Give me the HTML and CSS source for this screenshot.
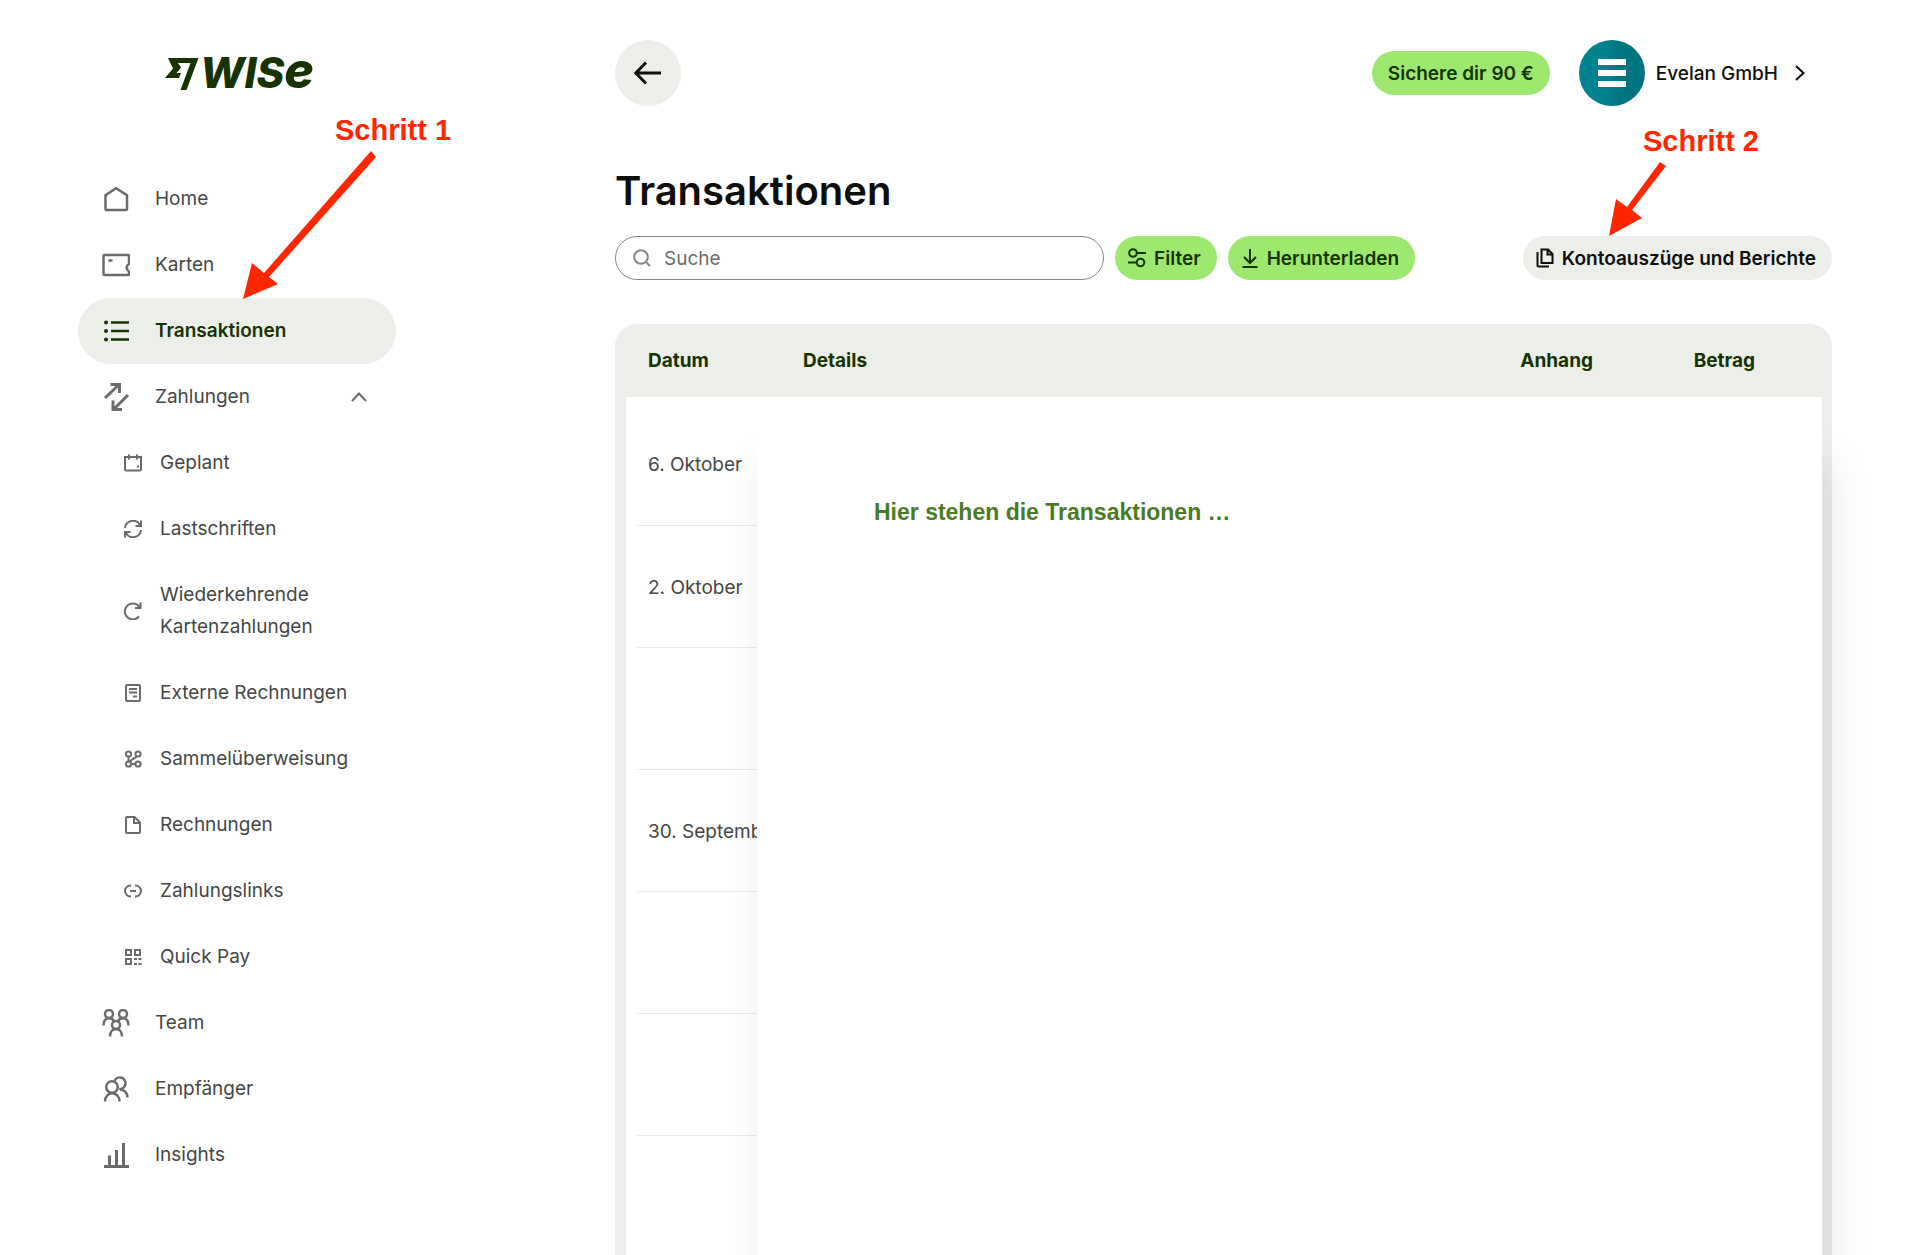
FILE: index.html
```html
<!DOCTYPE html>
<html lang="de">
<head>
    <meta charset="UTF-8">
    <meta name="viewport" content="width=device-width, initial-scale=1.0">
    <title>Transaktionen</title>
    <link rel="stylesheet" href="styles.css">
</head>
<body>
    <div class="layout">
        <aside class="sidebar">
            <a class="logo" href="#" aria-label="Wise">
                <svg width="34" height="33" viewBox="0 0 34 33"><path fill-rule="evenodd" d="M3 1h30.500L21.500 33H15.500L25.500 6H13l3 4.500-4.500 5.500h4.500L14 21H0l8-9.500z"/></svg>
                <span class="logo-text">WIS<span class="logo-e">e</span></span>
            </a>
            <nav class="nav">
                <a class="nav-item" href="#">
                    <svg class="icon" viewBox="0 0 28 28"><path d="M3.500 10.200 14 3.200l11 7V24a1 1 0 0 1-1 1H4.500a1 1 0 0 1-1-1z"/></svg>
                    Home
                </a>
                <a class="nav-item" href="#">
                    <svg class="icon" viewBox="0 0 28 28"><path d="M27 11V5a1 1 0 0 0-1-1H2.500a1 1 0 0 0-1 1v18a1 1 0 0 0 1 1H26a1 1 0 0 0 1-1v-2.500c-3-2-3.500-5.500 0-7.500zM6.500 9.500h4"/></svg>
                    Karten
                </a>
                <a class="nav-item active" href="#">
                    <svg class="icon" viewBox="0 0 28 28"><path d="M9 5.500h18M9 14h18M9 22.500h18"/><g class="dots"><circle cx="4" cy="5.500" r="2"/><circle cx="4" cy="14" r="2"/><circle cx="4" cy="22.500" r="2"/></g></svg>
                    Transaktionen
                </a>
                <a class="nav-item" href="#">
                    <svg class="icon icon-bold" viewBox="0 0 28 28"><path d="M3 15 17 1.500M8.500 1.500H17.500V10M26 12 12 26M11 17.500V26.500h9"/></svg>
                    Zahlungen
                    <svg class="chevron-up" width="18" height="12" viewBox="0 0 18 12"><path d="M2 10l7-7.500 7 7.500"/></svg>
                </a>
                <div class="subnav">
                    <a class="nav-item" href="#">
                        <svg class="icon-small" viewBox="0 0 18 18"><path d="M1 3h16v12.500a1 1 0 0 1-1 1H2a1 1 0 0 1-1-1zM5 .500v5M13 .500v5M13 12.500h2"/></svg>
                        Geplant
                    </a>
                    <a class="nav-item" href="#">
                        <svg class="icon-small" viewBox="0 0 18 18"><path d="M1 8A8 8 0 0 1 16 5M17 .500V6h-5.500M17 10A8 8 0 0 1 2 13M1 17.500V12h5.500"/></svg>
                        Lastschriften
                    </a>
                    <a class="nav-item" href="#">
                        <svg class="icon-small" viewBox="0 0 18 18"><path d="M15 14.500A8 8 0 1 1 15.500 5M16.500 .500V6H11"/></svg>
                        Wiederkehrende<br>Kartenzahlungen
                    </a>
                    <a class="nav-item" href="#">
                        <svg class="icon-small" viewBox="0 0 18 18"><path d="M3 1h12a1 1 0 0 1 1 1v14a1 1 0 0 1-1 1H3a1 1 0 0 1-1-1V2a1 1 0 0 1 1-1zM5 5h8M5 8.500h8M9 12.500h4"/></svg>
                        Externe Rechnungen
                    </a>
                    <a class="nav-item" href="#">
                        <svg class="icon-small" viewBox="0 0 18 18"><circle cx="4.500" cy="4" r="2.600"/><circle cx="14" cy="4" r="2.600"/><circle cx="4.500" cy="14" r="2.600"/><circle cx="14" cy="14" r="2.600"/><path d="M4.500 6.500v5M12.500 6.500c-1 2.500-5 1.500-6 5M7 14h4.500"/></svg>
                        Sammelüberweisung
                    </a>
                    <a class="nav-item" href="#">
                        <svg class="icon-small" viewBox="0 0 18 18"><path d="M3 1h7.500L16 6.500V16a1 1 0 0 1-1 1H3a1 1 0 0 1-1-1V2a1 1 0 0 1 1-1zM10 1v6h6"/></svg>
                        Rechnungen
                    </a>
                    <a class="nav-item" href="#">
                        <svg class="icon-small" viewBox="0 0 18 18"><path d="M7 3.500H6.500a5.500 5.500 0 0 0 0 11H7M11 3.500h.500a5.500 5.500 0 0 1 0 11H11M6 9h6"/></svg>
                        Zahlungslinks
                    </a>
                    <a class="nav-item" href="#">
                        <svg class="icon-small" viewBox="0 0 18 18"><path d="M2 2h5v5H2zM11 2h5v5h-5zM2 11h5v5H2zM10 11h3M14.500 11h3M10 16h3M14.500 16h3"/></svg>
                        Quick Pay
                    </a>
                </div>
                <a class="nav-item" href="#">
                    <svg class="icon" viewBox="0 0 28 28"><circle cx="7" cy="5" r="4"/><circle cx="21" cy="5" r="4"/><circle cx="14" cy="16" r="4"/><path d="M1.500 16.500C1.500 8 9 7.500 12 12M26.500 16.500C26.500 8 19 7.500 16 12M8 27.500c0-10 12-10 12 0"/></svg>
                    Team
                </a>
                <a class="nav-item" href="#">
                    <svg class="icon" viewBox="0 0 28 28"><circle cx="10" cy="12" r="5.800"/><path d="M3 26.500c0-11 14.500-11 14.500 0M12.500 5.800a5.800 5.800 0 1 1 4.800 8.200M18 14.500c4 0 7.500 3 7.500 8"/></svg>
                    Empfänger
                </a>
                <a class="nav-item" href="#">
                    <svg class="icon icon-bold" viewBox="0 0 28 28"><path d="M2 25.500h25M7.500 25V14.500M14.500 25V9M21.500 25V2"/></svg>
                    Insights
                </a>
            </nav>
            <div class="step step-one">
                <strong>Schritt 1</strong>
                <svg width="133" height="148" viewBox="0 0 133 148"><path d="M128 0l5 6L26 126l9 7L0 148l9-36 12 10z"/></svg>
            </div>
        </aside>

        <main class="main">
            <header class="topbar">
                <button class="back" type="button" aria-label="Zurück">
                    <svg width="28" height="24" viewBox="0 0 28 24"><path d="M27 12H2M12 1.500 1.800 12 12 22.500"/></svg>
                </button>
                <button class="btn btn-green invite" type="button">Sichere dir 90 €</button>
                <a class="profile" href="#">
                    <span class="avatar">
                        <svg width="28" height="28" viewBox="0 0 28 28"><path d="M0 0h28v6H0zM0 11h28v6H0zM0 22h28v6H0z"/></svg>
                    </span>
                    Evelan GmbH
                    <svg class="chevron-right" width="12" height="18" viewBox="0 0 12 18"><path d="M2 2l7.500 7L2 16"/></svg>
                </a>
            </header>

            <h1>Transaktionen</h1>

            <div class="toolbar">
                <label class="search">
                    <svg width="18" height="18" viewBox="0 0 18 18"><circle cx="8" cy="8" r="6.800"/><path d="M13 13l4 4"/></svg>
                    <input type="search" placeholder="Suche" aria-label="Suche">
                </label>
                <button class="btn btn-green" type="button">
                    <svg width="18" height="20" viewBox="0 0 18 20"><circle cx="5" cy="5" r="3.800"/><circle cx="12.500" cy="14.500" r="3.800"/><path d="M9 5h9M0 14.500h8.500"/></svg>
                    Filter
                </button>
                <button class="btn btn-green" type="button">
                    <svg width="18" height="20" viewBox="0 0 18 20"><path d="M9 1v14M3 9l6 6 6-6M1.500 19h15"/></svg>
                    Herunterladen
                </button>
                <button class="btn btn-gray" type="button">
                    <svg width="18" height="20" viewBox="0 0 18 20"><path d="M6 1.500h6l4.500 4.500v9h-11V1.500zM11.500 1.500V6.500h5M1.500 4v13.500a1 1 0 0 0 1 1H13"/></svg>
                    Kontoauszüge und Berichte
                </button>
            </div>

            <div class="table-card">
                <table>
                    <thead>
                        <tr>
                            <th class="col-date">Datum</th>
                            <th>Details</th>
                            <th class="col-file">Anhang</th>
                            <th class="col-amount">Betrag</th>
                        </tr>
                    </thead>
                    <tbody>
                        <tr><td>6. Oktober</td><td></td><td></td><td></td></tr>
                        <tr><td>2. Oktober</td><td></td><td></td><td></td></tr>
                        <tr><td></td><td></td><td></td><td></td></tr>
                        <tr><td>30. September</td><td></td><td></td><td></td></tr>
                        <tr><td></td><td></td><td></td><td></td></tr>
                        <tr><td></td><td></td><td></td><td></td></tr>
                        <tr><td></td><td></td><td></td><td></td></tr>
                    </tbody>
                </table>
                <div class="cover">Hier stehen die Transaktionen …</div>
            </div>

            <div class="step step-two">
                <strong>Schritt 2</strong>
                <svg width="57" height="74" viewBox="0 0 57 74"><path d="M51 0l6 4L23 48l10 8L0 74l7-37 11 8z"/></svg>
            </div>
        </main>
    </div>
</body>
</html>
```

FILE: styles.css
```css
* {
    box-sizing: border-box;
}
body {
    margin: 0;
    height: 100vh;
    overflow: hidden;
    background: #fff;
    color: #454745;
    font-family: Inter, sans-serif;
    font-size: 19px;
}
a {
    color: inherit;
    text-decoration: none;
}
svg {
    flex: none;
    fill: none;
    stroke: currentColor;
    stroke-width: 2;
}
.layout {
    display: flex;
    gap: 219px;
    padding: 0 88px 0 78px;
}

/* Sidebar */
.sidebar {
    position: relative;
    flex: none;
    width: 318px;
}
.logo {
    display: flex;
    align-items: center;
    gap: 1px;
    height: 66px;
    margin-top: 40px;
    padding-left: 87px;
    color: #163300;
}
.logo svg {
    fill: currentColor;
    stroke: none;
}
.logo-text {
    font-size: 42px;
    font-style: italic;
    font-weight: 800;
    line-height: 66px;
}
.logo-e {
    font-size: 50px;
    line-height: 1px;
}
.nav {
    margin-top: 60px;
}
.nav-item {
    display: flex;
    align-items: center;
    gap: 25px;
    padding: 17px 28px 17px 24px;
    line-height: 32px;
    border-radius: 33px;
}
.nav-item.active {
    background: #eceeea;
    color: #163300;
    font-weight: 600;
}
.icon {
    width: 28px;
    height: 28px;
    color: #6a6c6a;
    stroke-width: 2.5;
}
.icon-bold {
    stroke-width: 3;
}
.active .icon {
    color: #163300;
}
.dots {
    fill: currentColor;
    stroke: none;
}
.chevron-up {
    margin-left: auto;
    color: #6a6c6a;
}
.subnav .nav-item {
    gap: 18px;
    padding-left: 46px;
}
.icon-small {
    width: 18px;
    height: 18px;
    color: #6a6c6a;
}

/* Header */
.main {
    position: relative;
    flex: 1;
    min-width: 0;
}
.topbar {
    display: flex;
    align-items: center;
    margin-top: 40px;
    padding-right: 26px;
}
.back {
    display: flex;
    align-items: center;
    justify-content: center;
    width: 66px;
    height: 66px;
    border: none;
    border-radius: 50%;
    background: #eceeea;
    color: #0e0f0c;
    cursor: pointer;
}
.back svg {
    stroke-width: 3;
}
.profile {
    display: flex;
    align-items: center;
    gap: 11px;
    margin-left: 29px;
    color: #0e0f0c;
    font-weight: 500;
}
.avatar {
    display: flex;
    align-items: center;
    justify-content: center;
    width: 66px;
    height: 66px;
    border-radius: 50%;
    background: linear-gradient(90deg, #00828f 40%, #00757f 60%);
    color: #fff;
}
.avatar svg {
    fill: currentColor;
    stroke: none;
}
.chevron-right {
    margin-left: 5px;
}
h1 {
    margin: 59px 0 20px;
    color: #0e0f0c;
    font-size: 40px;
    font-weight: 600;
    line-height: 51px;
}

/* Toolbar */
.toolbar {
    display: flex;
    gap: 11px;
}
.search {
    display: flex;
    align-items: center;
    gap: 13px;
    width: 489px;
    height: 44px;
    padding: 0 17px;
    border: 1px solid #868885;
    border-radius: 22px;
    color: #868885;
}
.search input {
    flex: 1;
    min-width: 0;
    padding: 0;
    border: none;
    outline: none;
    background: none;
    font: inherit;
}
.search input::placeholder {
    color: #6a6c6a;
    opacity: 1;
}
.btn {
    display: flex;
    align-items: center;
    gap: 8px;
    height: 44px;
    padding: 0 16px 0 13px;
    border: none;
    border-radius: 22px;
    font: inherit;
    font-weight: 600;
    white-space: nowrap;
    cursor: pointer;
}
.btn-green {
    background: #9fe870;
    color: #163300;
}
.btn-gray {
    margin-left: auto;
    background: #eceeea;
    color: #0e0f0c;
}
.invite {
    margin-left: auto;
    padding: 0 16px;
}

/* Table */
.table-card {
    position: relative;
    margin-top: 44px;
    padding: 0 10px 0 11px;
    border-radius: 22px 22px 0 0;
    background: #eceeea;
}
table {
    width: 100%;
    border-spacing: 0;
    table-layout: fixed;
}
th {
    height: 73px;
    padding: 0 11px;
    color: #163300;
    font-weight: 700;
    text-align: left;
}
th:first-child,
td:first-child {
    padding-left: 22px;
}
.col-date {
    width: 166px;
}
.col-file,
.col-amount {
    width: 200px;
    text-align: right;
}
.col-file {
    padding-right: 29px;
}
.col-amount {
    padding-right: 67px;
}
tbody {
    background: #fff;
}
td {
    position: relative;
    height: 122px;
    padding: 0;
    white-space: nowrap;
}
td::after {
    content: "";
    position: absolute;
    left: 0;
    right: 0;
    bottom: 0;
    border-bottom: 1px solid #e8e9e7;
}
td:first-child::after {
    left: 11px;
}
tbody tr:first-child td {
    height: 129px;
    padding-top: 6px;
}
.cover {
    position: absolute;
    top: 73px;
    right: 10px;
    bottom: 0;
    left: 142px;
    padding: 100px 117px;
    background: #fff;
    box-shadow: 8px 66px 40px rgba(14, 15, 12, 0.1);
    color: #4b7a25;
    font-family: "Liberation Sans", Arial, sans-serif;
    font-size: 23px;
    font-weight: bold;
    line-height: 30px;
}

/* Step markers */
.step {
    position: absolute;
    color: #ff2600;
    font-family: "Liberation Sans", Arial, sans-serif;
    font-size: 29px;
    line-height: 34px;
}
.step svg {
    display: block;
    fill: currentColor;
    stroke: none;
}
.step-one {
    top: 113px;
    left: 165px;
    width: 230px;
}
.step-one strong {
    display: block;
    margin: 0 0 4px 92px;
}
.step-two {
    top: 124px;
    right: 73px;
    width: 150px;
}
.step-two strong {
    display: block;
    margin: 0 0 4px;
    text-align: right;
}
```
